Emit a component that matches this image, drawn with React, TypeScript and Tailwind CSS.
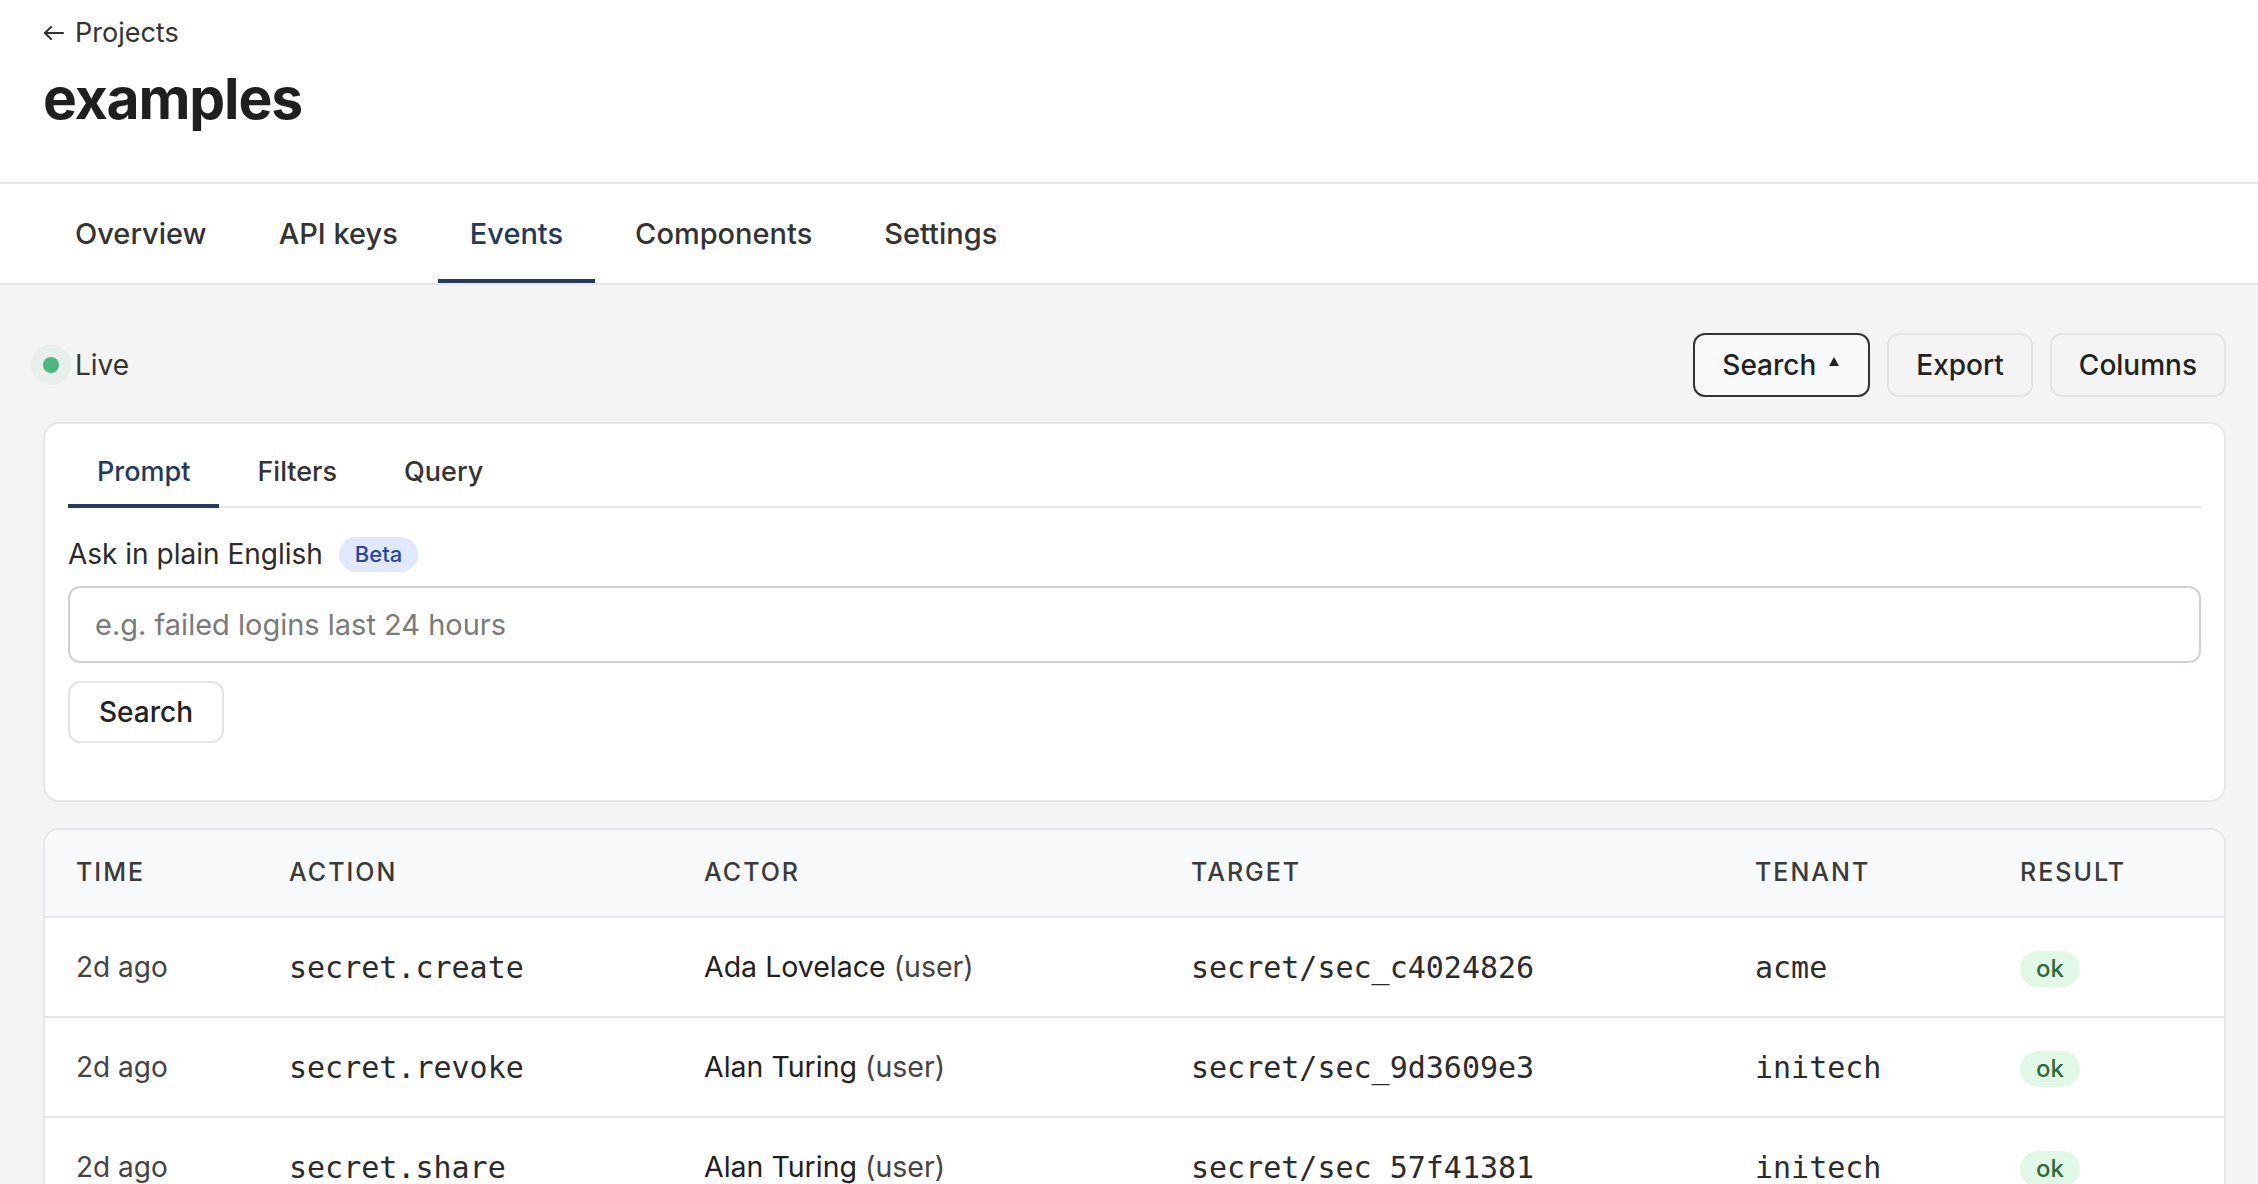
import { useState } from "react";
import clsx from "clsx";

type EventRow = {
  time: string;
  action: string;
  actor: string;
  actorKind: string;
  target: string;
  tenant: string;
  result: string;
};

const projectTabs = ["Overview", "API keys", "Events", "Components", "Settings"];
const searchTabs = ["Prompt", "Filters", "Query"];

const events: EventRow[] = [
  { time: "2d ago", action: "secret.create", actor: "Ada Lovelace", actorKind: "user", target: "secret/sec_c4024826", tenant: "acme", result: "ok" },
  { time: "2d ago", action: "secret.revoke", actor: "Alan Turing", actorKind: "user", target: "secret/sec_9d3609e3", tenant: "initech", result: "ok" },
  { time: "2d ago", action: "secret.share", actor: "Alan Turing", actorKind: "user", target: "secret/sec_57f41381", tenant: "initech", result: "ok" },
  { time: "3d ago", action: "secret.rotate", actor: "Grace Hopper", actorKind: "user", target: "secret/sec_1b7e0c52", tenant: "acme", result: "ok" },
];

const cols = "grid grid-cols-[213px_415px_487px_564px_265px_1fr] items-center pl-[31px]";
const mono = "font-['DejaVu_Sans_Mono','Liberation_Mono',monospace] text-[30px] text-[#2b2b2b]";

function BackArrow() {
  return (
    <svg width="21" height="14" viewBox="0 0 21 14" fill="none" stroke="currentColor" strokeWidth="2" strokeLinecap="round" strokeLinejoin="round">
      <path d="M20 7H2" />
      <path d="M8 1 2 7l6 6" />
    </svg>
  );
}

function Caret() {
  return (
    <svg width="10" height="9" viewBox="0 0 10 9" className="mb-[8px]">
      <polygon points="5,0 10,9 0,9" fill="currentColor" />
    </svg>
  );
}

export default function App() {
  const [tab, setTab] = useState("Events");
  const [searchTab, setSearchTab] = useState("Prompt");
  const [query, setQuery] = useState("");

  return (
    <div className="min-h-screen bg-[#f4f4f4] font-['Inter','Liberation_Sans',sans-serif] text-[#333]">
      <header className="h-[184px] bg-white border-b-2 border-[#e6e6ea] px-[43px] pt-[18px]">
        <a href="#" className="flex items-center gap-[11px] text-[27px] leading-[30px] text-[#333]">
          <BackArrow />
          Projects
        </a>
        <h1 className="mt-[17px] text-[57px] leading-[68px] font-bold tracking-[-0.02em] text-[#1f1f1f]">
          examples
        </h1>
      </header>

      <nav className="h-[101px] bg-white border-b-2 border-[#e6e6ea] pl-[43px] flex gap-[8px]">
        {projectTabs.map((t) => (
          <button
            key={t}
            onClick={() => setTab(t)}
            className={clsx(
              "h-full px-[32px] border-y-4 border-transparent text-[29px] font-medium",
              t === tab ? "border-b-[#263c5e] text-[#22395c]" : "text-[#333]"
            )}
          >
            {t}
          </button>
        ))}
      </nav>

      <main className="pl-[43px] pr-[32px] pt-[48px] pb-[40px]">
        <div className="h-[64px] flex items-center justify-between">
          <div className="flex items-center gap-[16px] text-[28px]">
            <span className="w-[16px] h-[16px] rounded-full bg-[#4fb681] ring-[12px] ring-[#e9efea]" />
            Live
          </div>
          <div className="flex items-center gap-[17px] text-[28px] font-medium text-[#222]">
            <button className="h-[64px] pl-[27px] pr-[29px] flex items-center gap-[13px] rounded-[12px] border-2 border-[#333] bg-[#f8f9fb]">
              Search
              <Caret />
            </button>
            <button className="h-[64px] px-[27px] rounded-[12px] border-2 border-[#e4e4e8]">Export</button>
            <button className="h-[64px] px-[27px] rounded-[12px] border-2 border-[#e4e4e8]">Columns</button>
          </div>
        </div>

        <section className="mt-[25px] bg-white border-2 border-[#e6e6ea] rounded-[16px] px-[23px] pt-[12px] pb-[57px]">
          <div className="flex gap-[9px] border-b-2 border-[#e6e6ea]">
            {searchTabs.map((t) => (
              <button
                key={t}
                onClick={() => setSearchTab(t)}
                className={clsx(
                  "h-[72px] -mb-[2px] px-[29px] border-y-4 border-transparent text-[27px] font-medium",
                  t === searchTab ? "border-b-[#263c5e] text-[#22395c]" : "text-[#333]"
                )}
              >
                {t}
              </button>
            ))}
          </div>

          <div className="mt-[25px] flex items-center gap-[16px]">
            <label htmlFor="ask" className="text-[28px] text-[#2b2b2b]">
              Ask in plain English
            </label>
            <span className="h-[35px] px-[16px] flex items-center rounded-full bg-[#dfe9fb] text-[22px] font-medium text-[#2a45a6]">
              Beta
            </span>
          </div>

          <input
            id="ask"
            value={query}
            onChange={(e) => setQuery(e.target.value)}
            placeholder="e.g. failed logins last 24 hours"
            className="mt-[11px] block w-full h-[77px] px-[25px] rounded-[12px] border-2 border-[#cfd3d8] text-[29px] text-[#222] placeholder:text-[#7a7a7a] outline-none"
          />

          <button className="mt-[18px] h-[62px] px-[29px] rounded-[12px] border-2 border-[#e4e4e8] bg-white text-[28px] font-medium text-[#222]">
            Search
          </button>
        </section>

        <section className="mt-[26px] bg-white border-2 border-[#e6e6ea] rounded-[16px] overflow-hidden">
          <div className={clsx(cols, "h-[88px] bg-[#f8f9fa] border-b-2 border-[#e6e6ea] text-[25px] font-medium tracking-[0.08em] text-[#3a3a3a] uppercase")}>
            <span>Time</span>
            <span>Action</span>
            <span>Actor</span>
            <span>Target</span>
            <span>Tenant</span>
            <span>Result</span>
          </div>
          {events.map((e) => (
            <div key={e.target} className={clsx(cols, "h-[100px] border-b-2 border-[#e6e6ea] text-[28px]")}>
              <span className="text-[#444]">{e.time}</span>
              <span className={mono}>{e.action}</span>
              <span className="text-[28.5px] text-[#1f1f1f]">
                {e.actor} <span className="text-[#444]">({e.actorKind})</span>
              </span>
              <span className={mono}>{e.target}</span>
              <span className={mono}>{e.tenant}</span>
              <span>
                <span className="inline-flex h-[36px] px-[16px] items-center rounded-full bg-[#e2f8e6] text-[24px] font-medium text-[#2f6b3f]">
                  {e.result}
                </span>
              </span>
            </div>
          ))}
        </section>
      </main>
    </div>
  );
}
